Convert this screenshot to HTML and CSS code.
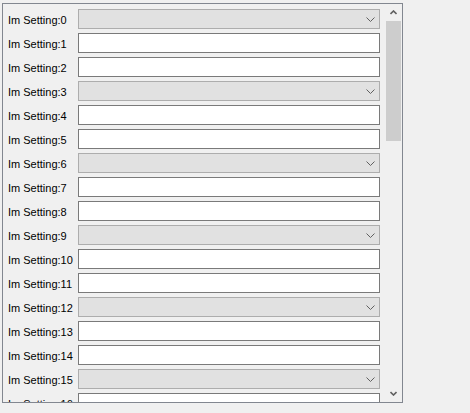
FILE: index.html
```html
<!DOCTYPE html>
<html>
<head>
<meta charset="utf-8">
<link rel="stylesheet" href="styles.css">
</head>
<body>
<div class="frame">
  <div class="content">
    <div class="row"><span class="label">Im Setting:0</span><div class="combo"><svg class="chev" width="9" height="5" viewBox="0 0 9 5"><path d="M0.5 0.5 L4.5 4.5 L8.5 0.5" fill="none" stroke="#606060" stroke-width="1"/></svg></div></div>
    <div class="row"><span class="label">Im Setting:1</span><div class="text"></div></div>
    <div class="row"><span class="label">Im Setting:2</span><div class="text"></div></div>
    <div class="row"><span class="label">Im Setting:3</span><div class="combo"><svg class="chev" width="9" height="5" viewBox="0 0 9 5"><path d="M0.5 0.5 L4.5 4.5 L8.5 0.5" fill="none" stroke="#606060" stroke-width="1"/></svg></div></div>
    <div class="row"><span class="label">Im Setting:4</span><div class="text"></div></div>
    <div class="row"><span class="label">Im Setting:5</span><div class="text"></div></div>
    <div class="row"><span class="label">Im Setting:6</span><div class="combo"><svg class="chev" width="9" height="5" viewBox="0 0 9 5"><path d="M0.5 0.5 L4.5 4.5 L8.5 0.5" fill="none" stroke="#606060" stroke-width="1"/></svg></div></div>
    <div class="row"><span class="label">Im Setting:7</span><div class="text"></div></div>
    <div class="row"><span class="label">Im Setting:8</span><div class="text"></div></div>
    <div class="row"><span class="label">Im Setting:9</span><div class="combo"><svg class="chev" width="9" height="5" viewBox="0 0 9 5"><path d="M0.5 0.5 L4.5 4.5 L8.5 0.5" fill="none" stroke="#606060" stroke-width="1"/></svg></div></div>
    <div class="row"><span class="label">Im Setting:10</span><div class="text"></div></div>
    <div class="row"><span class="label">Im Setting:11</span><div class="text"></div></div>
    <div class="row"><span class="label">Im Setting:12</span><div class="combo"><svg class="chev" width="9" height="5" viewBox="0 0 9 5"><path d="M0.5 0.5 L4.5 4.5 L8.5 0.5" fill="none" stroke="#606060" stroke-width="1"/></svg></div></div>
    <div class="row"><span class="label">Im Setting:13</span><div class="text"></div></div>
    <div class="row"><span class="label">Im Setting:14</span><div class="text"></div></div>
    <div class="row"><span class="label">Im Setting:15</span><div class="combo"><svg class="chev" width="9" height="5" viewBox="0 0 9 5"><path d="M0.5 0.5 L4.5 4.5 L8.5 0.5" fill="none" stroke="#606060" stroke-width="1"/></svg></div></div>
    <div class="row"><span class="label">Im Setting:16</span><div class="text"></div></div>
  </div>
  <div class="scrollbar">
    <div class="sbtn"><svg width="7" height="5" viewBox="0 0 7 5"><path d="M0.5 4 L3.5 1 L6.5 4" fill="none" stroke="#606060" stroke-width="1.6"/></svg></div>
    <div class="track"><div class="thumb"></div></div>
    <div class="sbtn"><svg width="7" height="5" viewBox="0 0 7 5"><path d="M0.5 1 L3.5 4 L6.5 1" fill="none" stroke="#606060" stroke-width="1.6"/></svg></div>
  </div>
</div>
</body>
</html>
```

FILE: styles.css
```css
html, body {
  margin: 0;
  padding: 0;
  background: #f0f0f0;
}
body {
  padding: 3px 0 0 2px;
  font-family: "Liberation Sans", Arial, sans-serif;
  font-size: 11px;
  color: #000;
}
.frame {
  width: 399px;
  height: 398px;
  border: 1px solid #828790;
  display: flex;
  overflow: hidden;
}
.content {
  flex: 1;
  overflow: hidden;
  padding: 5px 5px 0 5px;
  display: flex;
  flex-direction: column;
  gap: 4px;
}
.row {
  display: flex;
  align-items: center;
  height: 20px;
  flex: none;
}
.label {
  width: 70px;
  flex: none;
  white-space: nowrap;
  padding-top: 1px;
}
.combo {
  flex: 1;
  height: 20px;
  box-sizing: border-box;
  background: #e1e1e1;
  border: 1px solid #adadad;
  display: flex;
  align-items: center;
  justify-content: flex-end;
  padding-right: 4px;
}
.chev {
  display: block;
  margin-top: 1px;
}
.text {
  flex: 1;
  height: 20px;
  box-sizing: border-box;
  background: #fff;
  border: 1px solid #7a7a7a;
}
.scrollbar {
  width: 17px;
  flex: none;
  display: flex;
  flex-direction: column;
  background: #f0f0f0;
}
.sbtn {
  height: 17px;
  flex: none;
  display: flex;
  align-items: center;
  justify-content: center;
}
.track {
  flex: 1;
  padding: 0 1px;
}
.thumb {
  height: 120px;
  background: #cdcdcd;
}
```
